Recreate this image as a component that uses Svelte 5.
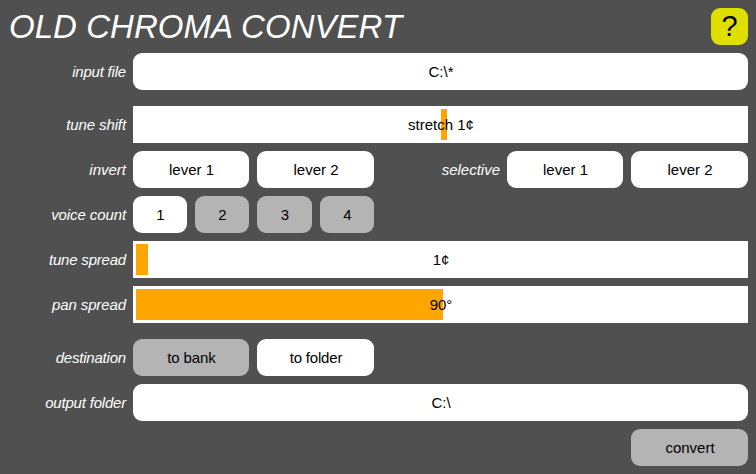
<script>
  const voices = [1, 2, 3, 4];
  let voice = $state(1);
  let destination = $state('folder');
</script>

{#snippet slider(start, size, text)}
  <div class="slider">
    <div class="fill" style="margin-left: {start}px; width: {size}px"></div>
    <span class="value">{text}</span>
  </div>
{/snippet}

<main>
  <header>
    <h1>OLD CHROMA CONVERT</h1>
    <button class="help">?</button>
  </header>

  <div class="row gap">
    <span class="label tight">input file</span>
    <button class="field">C:\*</button>
  </div>

  <div class="row">
    <span class="label snug">tune shift</span>
    {@render slider(305, 6, 'stretch 1¢')}
  </div>

  <div class="row">
    <span class="label">invert</span>
    <button class="a">lever 1</button>
    <button class="b">lever 2</button>
    <span class="label second">selective</span>
    <button class="a">lever 1</button>
    <button class="b">lever 2</button>
  </div>

  <div class="row">
    <span class="label snug">voice count</span>
    {#each voices as n}
      <button class="voice" class:wide={n === 3} class:off={voice !== n} onclick={() => (voice = n)}>{n}</button>
    {/each}
  </div>

  <div class="row">
    <span class="label tight">tune spread</span>
    {@render slider(0, 12, '1¢')}
  </div>

  <div class="row gap">
    <span class="label snug">pan spread</span>
    {@render slider(0, 307, '90°')}
  </div>

  <div class="row">
    <span class="label tight">destination</span>
    <button class="a snug" class:off={destination !== 'bank'} onclick={() => (destination = 'bank')}>to bank</button>
    <button class="b tight" class:off={destination !== 'folder'} onclick={() => (destination = 'folder')}>to folder</button>
  </div>

  <div class="row">
    <span class="label tight">output folder</span>
    <button class="field">C:\</button>
  </div>

  <div class="row end">
    <button class="b off">convert</button>
  </div>
</main>

<style>
  :global(body) {
    background: #505050;
  }
  main {
    box-sizing: border-box;
    width: 756px;
    height: 474px;
    padding: 8px;
    display: flex;
    flex-direction: column;
    gap: 8px;
    background: #505050;
    color: #000;
    font: 15px/37px 'Liberation Sans', Arial, sans-serif;
  }
  header {
    display: flex;
    justify-content: space-between;
    height: 37px;
  }
  h1 {
    margin: 0;
    padding-left: 1px;
    color: #fff;
    font-size: 33px;
    font-weight: normal;
    font-style: italic;
    letter-spacing: 0.04px;
    white-space: nowrap;
  }
  .row {
    display: flex;
    gap: 8px;
    height: 37px;
  }
  .gap {
    margin-bottom: 8px;
  }
  .end {
    justify-content: flex-end;
  }
  .label {
    width: 118px;
    margin-right: -1px;
    color: #fff;
    font-style: italic;
    text-align: right;
    white-space: nowrap;
  }
  button {
    height: 37px;
    margin: 0;
    padding: 0 0 0 1px;
    border: 0;
    border-radius: 9px;
    background: #fff;
    color: #000;
    font: inherit;
    text-align: center;
  }
  .help {
    width: 37px;
    padding: 0;
    background: #e0e000;
    font-size: 29px;
  }
  .field {
    flex: 1;
  }
  .a {
    width: 116px;
  }
  .b {
    width: 117px;
  }
  .second {
    width: auto;
    flex: 1;
  }
  .snug {
    letter-spacing: -0.1px;
  }
  .tight {
    letter-spacing: -0.2px;
  }
  .voice {
    width: 54px;
  }
  .wide {
    width: 55px;
  }
  .off {
    background: #b4b4b4;
  }
  .slider {
    flex: 1;
    display: grid;
    box-sizing: border-box;
    height: 37px;
    padding: 3px;
    background: #fff;
  }
  .fill {
    grid-area: 1 / 1;
    height: 31px;
    background: #ffa500;
  }
  .value {
    grid-area: 1 / 1;
    z-index: 1;
    padding-left: 1px;
    line-height: 31px;
    text-align: center;
  }
</style>
